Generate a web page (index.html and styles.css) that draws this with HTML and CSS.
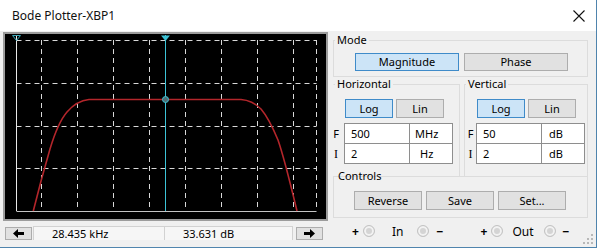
FILE: index.html
```html
<!DOCTYPE html>
<html lang="en">
<head>
    <meta charset="UTF-8">
    <title>Bode Plotter-XBP1</title>
    <link rel="stylesheet" href="styles.css">
</head>
<body>
    <div class="window">
        <div class="titlebar">
            <span class="title">Bode Plotter-XBP1</span>
            <svg class="close" width="12" height="12" viewBox="0 0 12 12">
                <path d="M0.5 0.5 L11.5 11.5 M11.5 0.5 L0.5 11.5" stroke="#111" stroke-width="1.1" fill="none"/>
            </svg>
        </div>
        <div class="client">
            <div class="scope">
                <svg class="screen" width="325" height="189" viewBox="0 0 325 189">
                    <rect x="1" y="1" width="323" height="187" fill="#000" stroke="#9c9c9c" stroke-width="2"/>
                    <g stroke="#d8d8d8" stroke-width="1" stroke-dasharray="5 4" fill="none">
                        <path d="M13.5 8.5 H313.5 M13.5 51.5 H313.5 M13.5 94.5 H313.5 M13.5 136.5 H313.5"/>
                        <path d="M38.5 8 V179 M74.5 8 V179 M110.5 8 V179 M146.5 8 V179 M182.5 8 V179 M218.5 8 V179 M254.5 8 V179 M290.5 8 V179 M313.5 8 V179"/>
                    </g>
                    <path d="M13.5 179.5 H313.5" stroke="#c4c4c4" stroke-width="1"/>
                    <path d="M13.5 4 V179" stroke="#e8e8e8" stroke-width="1"/>
                    <path d="M30.3 179 C35 160 40 141 47 117 C53 97 58 87 64 80 C70 73 76 68.5 86 67.5 L238 67.5 C246 68 252 71 258 77 C264 84 270 96 275 108 C281 125 287 150 294 179" stroke="#b3262b" stroke-width="1.6" fill="none"/>
                    <path d="M162.5 3 V179" stroke="#3cc3d6" stroke-width="1"/>
                    <path d="M158 3.5 H167 L162.5 9 Z" fill="#3cc3d6"/>
                    <path d="M9.5 3.5 H17.5 L13.5 8.5 Z" fill="none" stroke="#3aa8b8" stroke-width="1"/>
                    <circle cx="162.5" cy="67.5" r="3" fill="#4d6f75" stroke="#3cc3d6" stroke-width="1"/>
                </svg>
                <div class="readout">
                    <button class="arrow">
                        <svg width="11" height="9" viewBox="0 0 11 9"><path d="M0 4.5 L5 0 V3 H11 V6 H5 V9 Z" fill="#000"/></svg>
                    </button>
                    <div class="field field-x">28.435 kHz</div>
                    <div class="field field-y">33.631 dB</div>
                    <button class="arrow arrow-right">
                        <svg width="11" height="9" viewBox="0 0 11 9"><path d="M11 4.5 L6 0 V3 H0 V6 H6 V9 Z" fill="#000"/></svg>
                    </button>
                </div>
            </div>
            <div class="panel">
                <fieldset class="group mode">
                    <legend>Mode</legend>
                    <div class="btn-row">
                        <button class="btn wide selected">Magnitude</button>
                        <button class="btn wide">Phase</button>
                    </div>
                </fieldset>
                <div class="axes">
                    <fieldset class="group axis horizontal">
                        <legend>Horizontal</legend>
                        <div class="btn-row">
                            <button class="btn small selected">Log</button>
                            <button class="btn small">Lin</button>
                        </div>
                        <div class="entries">
                            <div class="entry">
                                <span class="letter">F</span>
                                <div class="cell value">500</div>
                                <div class="cell unit">MHz</div>
                            </div>
                            <div class="entry">
                                <span class="letter serif">I</span>
                                <div class="cell value">2</div>
                                <div class="cell unit indent">Hz</div>
                            </div>
                        </div>
                    </fieldset>
                    <fieldset class="group axis vertical">
                        <legend>Vertical</legend>
                        <div class="btn-row">
                            <button class="btn small selected">Log</button>
                            <button class="btn small">Lin</button>
                        </div>
                        <div class="entries">
                            <div class="entry">
                                <span class="letter">F</span>
                                <div class="cell value">50</div>
                                <div class="cell unit">dB</div>
                            </div>
                            <div class="entry">
                                <span class="letter serif">I</span>
                                <div class="cell value">2</div>
                                <div class="cell unit">dB</div>
                            </div>
                        </div>
                    </fieldset>
                </div>
                <fieldset class="group controls">
                    <legend>Controls</legend>
                    <div class="btn-row">
                        <button class="btn action">Reverse</button>
                        <button class="btn action">Save</button>
                        <button class="btn action">Set...</button>
                    </div>
                </fieldset>
                <div class="terminals">
                    <div class="term term-in">
                        <span class="sign">+</span>
                        <span class="radio"></span>
                        <span class="term-label">In</span>
                        <span class="radio"></span>
                        <span class="sign">&minus;</span>
                    </div>
                    <div class="term term-out">
                        <span class="sign">+</span>
                        <span class="radio"></span>
                        <span class="term-label">Out</span>
                        <span class="radio"></span>
                        <span class="sign">&minus;</span>
                    </div>
                </div>
            </div>
        </div>
        <svg class="grip" width="10" height="10" viewBox="0 0 10 10">
            <g fill="#b8b8b8">
                <rect x="8" y="0" width="2" height="2"/>
                <rect x="4" y="4" width="2" height="2"/>
                <rect x="8" y="4" width="2" height="2"/>
                <rect x="0" y="8" width="2" height="2"/>
                <rect x="4" y="8" width="2" height="2"/>
                <rect x="8" y="8" width="2" height="2"/>
            </g>
        </svg>
    </div>
</body>
</html>
```

FILE: styles.css
```css
body {
    margin: 0;
    background-color: #fff;
    font-family: "Noto Sans", "Open Sans", sans-serif;
    font-size: 11px;
    color: #000;
}
.window {
    position: relative;
    width: 596px;
    height: 247px;
    border-right: 1px solid #4f84ad;
    border-bottom: 1px solid #4f84ad;
    background-color: #fff;
}
.titlebar {
    height: 31px;
    display: flex;
    align-items: center;
    justify-content: space-between;
    padding: 0 11px 0 12px;
    box-sizing: border-box;
}
.title {
    font-size: 12px;
    color: #111;
}
.close {
    display: block;
}
.client {
    display: flex;
    height: 216px;
    background-color: #f0f0f0;
}
.scope {
    width: 330px;
    padding: 1px 0 0 3px;
    box-sizing: border-box;
}
.screen {
    display: block;
}
.readout {
    display: flex;
    margin: 5px 0 0 2px;
    height: 14px;
}
.arrow {
    width: 27px;
    height: 13px;
    margin: 1px 0 0;
    padding: 0;
    border: 1px solid #adadad;
    background-color: #e1e1e1;
    display: flex;
    align-items: center;
    justify-content: center;
}
.arrow-right {
    margin-left: 3px;
}
.field {
    height: 14px;
    line-height: 14px;
    padding-left: 18px;
    box-sizing: border-box;
    border: 1px solid #d2d2d2;
    border-bottom: none;
    background-color: #f6f6f6;
}
.field-x {
    width: 132px;
    margin-left: 1px;
}
.field-y {
    width: 128px;
    border-left: none;
}
.panel {
    flex: 1;
    padding: 0 8px 0 3px;
}
.group {
    margin: 0;
    padding: 0;
    border: 1px solid #dcdcdc;
    min-width: 0;
}
.group legend {
    margin-left: 1px;
    padding: 0 2px;
    line-height: 14px;
    background-color: #f0f0f0;
}
.mode {
    margin-top: 2px;
    padding: 6px 0 5px;
}
.btn-row {
    display: flex;
    gap: 5px;
}
.mode .btn-row {
    padding-left: 21px;
}
.btn {
    height: 18px;
    padding: 0;
    font-family: inherit;
    font-size: 11px;
    line-height: 16px;
    color: #000;
    border: 1px solid #adadad;
    background-color: #e1e1e1;
}
.btn.selected {
    background-color: #cce4f7;
    border-color: #3f8bc9;
}
.wide {
    width: 104px;
}
.axes {
    display: flex;
    gap: 4px;
}
.axis {
    padding: 8px 0 12px;
}
.horizontal {
    width: 127px;
    box-sizing: border-box;
    border-left-color: transparent;
}
.horizontal .btn-row {
    padding-left: 11px;
}
.vertical {
    flex: 1;
}
.vertical .btn-row {
    padding-left: 12px;
}
.axis .btn-row {
    gap: 3px;
}
.small {
    width: 48px;
    height: 19px;
}
.entries {
    margin-top: 5px;
}
.entry {
    display: flex;
    align-items: center;
}
.horizontal .entry {
    margin-left: -6px;
}
.letter {
    width: 16px;
    text-align: center;
}
.serif {
    font-family: "Liberation Serif", serif;
    font-size: 12px;
}
.vertical .letter {
    width: 11px;
}
.cell {
    height: 21px;
    line-height: 20px;
    box-sizing: border-box;
    border: 1px solid #8e8e8e;
    background-color: #fff;
}
.entry + .entry .cell {
    border-top: none;
    height: 20px;
}
.value {
    width: 66px;
    padding-left: 6px;
}
.unit {
    width: 43px;
    padding-left: 5px;
    border-left: none;
}
.vertical .unit {
    padding-left: 7px;
}
.unit.indent {
    padding-left: 10px;
}
.controls {
    margin-top: -8px;
    padding: 8px 0 7px;
}
.controls legend {
    margin-left: 2px;
}
.controls .btn-row {
    gap: 4px;
    padding-left: 20px;
}
.action {
    width: 68px;
    height: 19px;
}
.terminals {
    display: flex;
    align-items: center;
    height: 26px;
    padding-left: 19px;
    font-size: 12px;
}
.term {
    display: flex;
    align-items: center;
}
.term-out {
    margin-left: 37px;
}
.sign {
    width: 7px;
    text-align: center;
    font-weight: bold;
}
.radio {
    width: 10px;
    height: 10px;
    margin-left: 4px;
    border-radius: 50%;
    border: 1px solid #c4c4c4;
    background-color: #d4d4d4;
    box-shadow: inset 0 0 0 2px #f2f2f2;
}
.term-in .term-label {
    margin: 0 10px 0 17px;
}
.term-out .term-label {
    margin: 0 6px 0 9px;
}
.term .radio + .sign {
    margin-left: 7px;
}
.grip {
    position: absolute;
    right: 3px;
    bottom: 3px;
}
```
